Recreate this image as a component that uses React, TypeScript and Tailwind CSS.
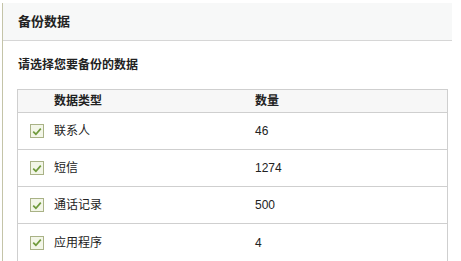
import React from "react";

const rows = [
  { name: "联系人", count: "46" },
  { name: "短信", count: "1274" },
  { name: "通话记录", count: "500" },
  { name: "应用程序", count: "4" },
];

function CheckBox() {
  return (
    <span className="w-[14px] h-[14px] border border-[#a9b286] bg-[#f3f6e8] flex items-center justify-center shrink-0">
      <svg width="10" height="9" viewBox="0 0 10 9">
        <path d="M1.2 4.6 L3.9 7.2 L8.8 1.6" fill="none" stroke="#6f9a3c" strokeWidth="1.7" />
      </svg>
    </span>
  );
}

export default function App() {
  return (
    <div
      className="w-[461px] h-[261px] bg-white overflow-hidden pt-[3px] pl-[2px] text-[#222]"
      style={{ fontFamily: '"Liberation Sans", "Noto Sans CJK SC", sans-serif' }}
    >
      <div className="w-[450px] h-full border-l border-[#c4c4a8]">
        <div className="h-[38px] bg-[#f7f8f8] border-b border-[#d6d6d6] flex items-center pl-[15px] text-[13px] font-bold">
          备份数据
        </div>
        <div className="h-[48px] flex items-center pl-[15px] text-[12px] font-bold">
          请选择您要备份的数据
        </div>
        <div className="ml-[14px] w-[431px] border border-[#cfcfcf] text-[12px]">
          <div className="h-[23px] bg-[#f7f7f7] border-b border-[#cfcfcf] flex items-center font-bold">
            <span className="w-[237px] pl-[36px]">数据类型</span>
            <span>数量</span>
          </div>
          {rows.map((r, i) => (
            <div
              key={r.name}
              className={`h-[37px] flex items-center ${i < rows.length - 1 ? "border-b border-[#cfcfcf]" : ""}`}
            >
              <span className="w-[237px] pl-[12px] flex items-center gap-[10px]">
                <CheckBox />
                <span>{r.name}</span>
              </span>
              <span>{r.count}</span>
            </div>
          ))}
        </div>
      </div>
    </div>
  );
}
